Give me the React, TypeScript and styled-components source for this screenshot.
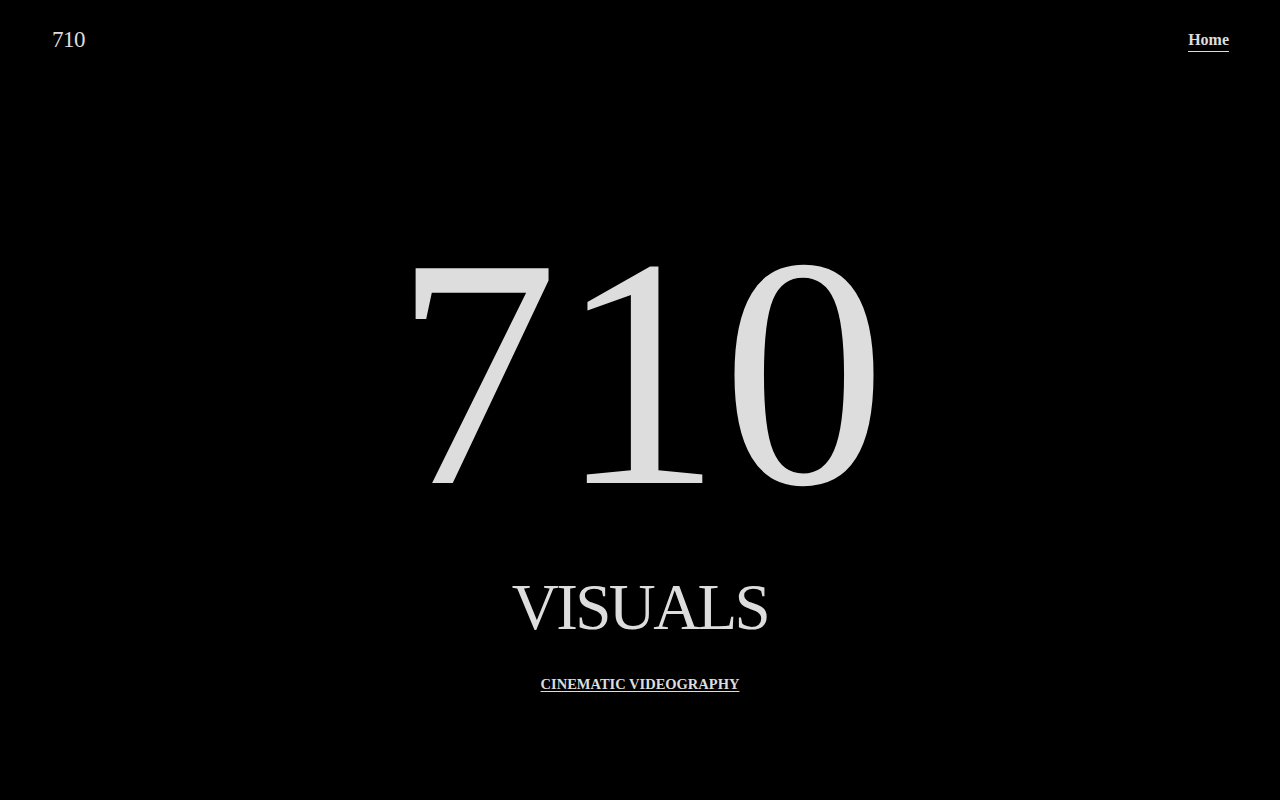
import React from 'react'
import styled, { createGlobalStyle } from 'styled-components'

const GlobalStyle = createGlobalStyle`
  html, body {
    margin: 0;
    padding: 0;
    background: #000;
  }
  body {
    font-family: 'Liberation Serif', 'Times New Roman', serif;
    color: #dddddd;
  }
`

const Page = styled.div`
  min-height: 800px;
  display: flex;
  flex-direction: column;
  background: #000;
`

const Header = styled.header`
  display: flex;
  justify-content: space-between;
  align-items: center;
  padding: 24px 51px 0 52px;
  height: 32px;
`

const Logo = styled.div`
  font-size: 23px;
  letter-spacing: -0.02em;
  color: #dddddd;
`

const NavLink = styled.a`
  font-size: 16px;
  font-weight: bold;
  color: #dddddd;
  text-decoration: none;
  border-bottom: 1px solid #dddddd;
  padding-bottom: 3px;
`

const Hero = styled.main`
  display: flex;
  flex-direction: column;
  align-items: center;
  padding-top: 153px;
`

const BigNumber = styled.h1`
  margin: 0;
  font-weight: normal;
  font-size: 328px;
  line-height: 1;
  letter-spacing: 0;
  color: #dddddd;
`

const Title = styled.h2`
  margin: 38px 0 0;
  font-weight: normal;
  font-size: 65px;
  line-height: 1;
  letter-spacing: -0.04em;
  color: #dddddd;
`

const Tagline = styled.a`
  margin-top: 36px;
  font-size: 14.5px;
  font-weight: bold;
  color: #dddddd;
  text-decoration: underline;
  text-underline-offset: 2px;
`

export default function App() {
  return (
    <Page>
      <GlobalStyle />
      <Header>
        <Logo>710</Logo>
        <nav>
          <NavLink href="#">Home</NavLink>
        </nav>
      </Header>
      <Hero>
        <BigNumber>710</BigNumber>
        <Title>VISUALS</Title>
        <Tagline href="#">CINEMATIC VIDEOGRAPHY</Tagline>
      </Hero>
    </Page>
  )
}
